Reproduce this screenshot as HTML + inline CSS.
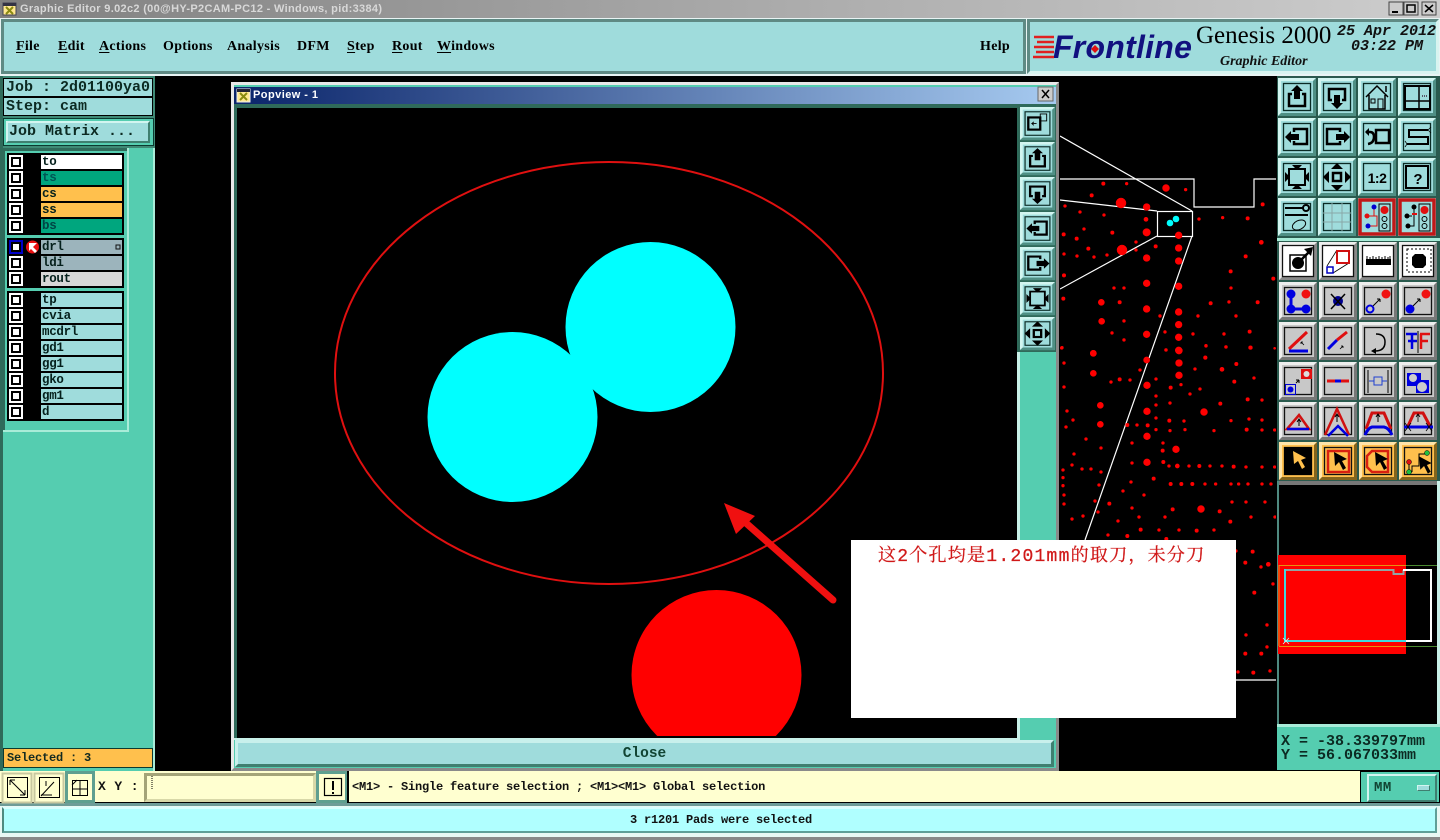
<!DOCTYPE html>
<html><head><meta charset="utf-8"><title>Graphic Editor</title>
<style>
html,body{margin:0;padding:0;width:1440px;height:840px;overflow:hidden;background:#000}
div{position:absolute;box-sizing:border-box;white-space:pre}
.m{font:bold 12px/14px "Liberation Mono",monospace;color:#123;letter-spacing:-.2px}
.l{font:bold 15px/18px "Liberation Mono",monospace;color:#0c2a22}
.n{font:bold 14px/16px "Liberation Serif",serif;color:#000;top:39px;letter-spacing:.3px}
.n u{text-decoration-thickness:1px;text-underline-offset:2px}
.r{left:41px;width:81px;height:14px;padding-left:1px;font:bold 12.5px/14px "Liberation Mono",monospace;color:#05201c;background:#9fdcdc;letter-spacing:-.3px}
.bev{border:2px solid;border-color:#d2f5f0 #3f7f70 #3f7f70 #d2f5f0}
</style></head><body>
<!-- title bar -->
<div style="left:0;top:0;width:1440px;height:18px;background:linear-gradient(90deg,#808080,#a8a8a8 50%,#cdcdcd)"></div>
<div style="left:20px;top:2px;font:bold 11px/14px 'Liberation Sans',sans-serif;color:#d8d8d8;letter-spacing:.32px">Graphic Editor 9.02c2 (00@HY-P2CAM-PC12 - Windows, pid:3384)</div>
<div style="left:0;top:18px;width:1440px;height:58px;background:#e8f4f4"></div>
<!-- menu -->
<div style="left:1px;top:19px;width:1025px;height:55px;background:#9fdcdc;border:3px solid #5f8a84"></div>
<div class="n" style="left:16px"><u>F</u>ile</div><div class="n" style="left:58px"><u>E</u>dit</div><div class="n" style="left:99px"><u>A</u>ctions</div><div class="n" style="left:163px">Options</div><div class="n" style="left:227px">Analysis</div><div class="n" style="left:297px">DFM</div><div class="n" style="left:347px"><u>S</u>tep</div><div class="n" style="left:392px"><u>R</u>out</div><div class="n" style="left:437px"><u>W</u>indows</div><div class="n" style="left:980px">Help</div>
<!-- logo -->
<div style="left:1027px;top:19px;width:412px;height:55px;background:#9fdcdc;border:3px solid;border-color:#5f8a84 #d8f4f0 #d8f4f0 #5f8a84"></div>
<div style="left:1053px;top:29px;font:italic bold 32px/36px 'Liberation Sans',sans-serif;color:#11117f;letter-spacing:.25px">Frontline</div>
<div style="left:1196px;top:21px;font:25px/29px 'Liberation Serif',serif;color:#000">Genesis 2000</div>
<div style="left:1337px;top:23px;font:italic bold 15px/17px 'Liberation Mono',monospace;color:#111">25 Apr 2012</div>
<div style="left:1351px;top:38px;font:italic bold 15px/17px 'Liberation Mono',monospace;color:#111">03:22 PM</div>
<div style="left:1220px;top:54px;font:italic bold 14px/16px 'Liberation Serif',serif;color:#111">Graphic Editor</div>
<!-- left panel -->
<div style="left:0;top:76px;width:155px;height:695px;background:#55cdb0;border-left:3px solid #2f6a5a;border-right:2px solid #a8ecd8"></div>
<div style="left:3px;top:76px;width:152px;height:72px;background:#3f8a76"></div>
<div class="l" style="left:3px;top:78px;width:150px;height:19px;background:#9fdcdc;border:1px solid #000;padding-left:2px;line-height:17px">Job : 2d01100ya0</div>
<div class="l" style="left:3px;top:97px;width:150px;height:19px;background:#9fdcdc;border:1px solid #000;padding-left:2px;line-height:18px">Step: cam</div>
<div style="left:3px;top:118px;width:151px;height:28px;background:#55cdb0;border:1px solid #0c3a30"></div>
<div class="l bev" style="left:6px;top:121px;width:144px;height:22px;background:#9fdcdc;padding-left:1px;line-height:18px">Job Matrix ...</div>
<div style="left:3px;top:148px;width:126px;height:284px;background:#2f6a5a;border-right:2px solid #a8ecd8;border-bottom:2px solid #a8ecd8"></div>
<div style="left:5px;top:151px;width:122px;height:279px;background:#55cdb0"></div>
<div style="left:7px;top:153px;width:117px;height:82px;background:#000"></div>
<div style="left:7px;top:238px;width:117px;height:50px;background:#000"></div>
<div style="left:7px;top:291px;width:117px;height:130px;background:#000"></div>
<div class="r" style="top:155px;background:#fff">to</div>
<div class="r" style="top:171px;background:#00a67e;color:#055">ts</div>
<div class="r" style="top:187px;background:#ffc04d">cs</div>
<div class="r" style="top:203px;background:#ffc04d">ss</div>
<div class="r" style="top:219px;background:#00a67e;color:#044">bs</div>
<div class="r" style="top:240px;background:#9cb4bc">drl</div>
<div class="r" style="top:256px;background:#9cb4bc">ldi</div>
<div class="r" style="top:272px;background:#d8d8d8">rout</div>
<div class="r" style="top:293px">tp</div>
<div class="r" style="top:309px">cvia</div>
<div class="r" style="top:325px">mcdrl</div>
<div class="r" style="top:341px">gd1</div>
<div class="r" style="top:357px">gg1</div>
<div class="r" style="top:373px">gko</div>
<div class="r" style="top:389px">gm1</div>
<div class="r" style="top:405px">d</div>
<div class="m" style="left:3px;top:748px;width:150px;height:20px;background:#ffc04d;border:1px solid #0c3a30;padding:2px 0 0 3px;color:#132a20;letter-spacing:-.2px">Selected : 3</div>
<!-- popview frame -->
<div style="left:231px;top:82px;width:828px;height:689px;background:#55cdb0;border:3px solid;border-color:#e8e8e8 #8a8a8a #8a8a8a #e8e8e8"></div>
<div style="left:234px;top:87px;width:822px;height:17px;background:linear-gradient(90deg,#0a246a,#a6caf0)"></div>
<div style="left:253px;top:88px;font:bold 11px/14px 'Liberation Sans',sans-serif;color:#fff;letter-spacing:.45px">Popview - 1</div>
<div style="left:234px;top:104px;width:822px;height:4px;background:#2f6a5a"></div>
<div style="left:234px;top:104px;width:4px;height:636px;background:#2f6a5a"></div>
<div style="left:1017px;top:104px;width:3px;height:636px;background:#c8f0e8"></div>
<div style="left:234px;top:738px;width:786px;height:2px;background:#c8f0e8"></div>
<div style="left:1017px;top:104px;width:39px;height:248px;background:#2f6a5a"></div>
<div style="left:235px;top:740px;width:819px;height:27px;background:#9fdcdc;border:3px solid;border-color:#c8f0ec #3f7f70 #3f7f70 #c8f0ec;text-align:center;font:bold 14.5px/23px 'Liberation Mono',monospace;color:#143">Close</div>
<!-- right column panels -->
<div style="left:1277px;top:76px;width:163px;height:405px;background:#2a5a4e"></div>
<div style="left:1277px;top:238px;width:163px;height:3px;background:#a8ecd8"></div>
<div style="left:1277px;top:481px;width:163px;height:4px;background:#777"></div>
<div style="left:1277px;top:481px;width:2px;height:246px;background:#4f8a80"></div>
<div style="left:1437px;top:481px;width:3px;height:246px;background:#c8f0e8"></div>
<div style="left:1277px;top:724px;width:163px;height:46px;background:#55cdb0;border-top:3px solid #a8ecd8"></div>
<div class="l" style="left:1281px;top:733px;color:#0c2a22">X = -38.339797mm</div>
<div class="l" style="left:1281px;top:747px;color:#0c2a22">Y = 56.067033mm</div>
<!-- bottom row -->
<div style="left:0;top:771px;width:1440px;height:33px;background:#ffffd0;border-bottom:2px solid #000"></div>
<div style="left:65px;top:771px;width:30px;height:32px;background:#ffffd0;border:3px solid #5f9f90"></div>
<div class="m" style="left:98px;top:780px;font-size:13px;letter-spacing:.4px;color:#111">X Y :</div>
<div style="left:144px;top:773px;width:172px;height:29px;background:#ffffd0;border:3px solid;border-color:#a4a478 #d8d8a8 #d8d8a8 #a4a478"></div>
<div style="left:316px;top:771px;width:32px;height:32px;background:#ffffd0;border:3px solid #5f9f90"></div>
<div style="left:347px;top:771px;width:2px;height:32px;background:#000"></div>
<div class="m" style="left:352px;top:780px;color:#111">&lt;M1&gt; - Single feature selection ; &lt;M1&gt;&lt;M1&gt; Global selection</div>
<div style="left:1360px;top:771px;width:80px;height:32px;background:#55cdb0;border:1px solid #000"></div>
<div class="m bev" style="left:1367px;top:774px;width:70px;height:28px;background:#55cdb0;padding:5px 0 0 5px;color:#143;font-size:14px;letter-spacing:.5px">MM</div>
<div style="left:1417px;top:785px;width:13px;height:6px;background:#9fdcdc;border:1px solid;border-color:#d2f5f0 #3f7f70 #3f7f70 #d2f5f0"></div>
<div style="left:0;top:803px;width:1440px;height:37px;background:#6e9c98"></div>
<div style="left:0;top:806px;width:1440px;height:31px;background:#e8f8f4"></div>
<div style="left:2px;top:807px;width:1435px;height:26px;background:#b0ffff;border-left:2px solid #4f8a80;border-bottom:2px solid #5f9f98;border-right:2px solid #5f9f98;border-top:2px solid #d8ffff"></div>
<div style="left:0;top:837px;width:1440px;height:3px;background:#888"></div>
<div class="m" style="left:630px;top:813px;color:#111">3 r1201 Pads were selected</div>

<svg width="1440" height="840" viewBox="0 0 1440 840" style="position:absolute;left:0;top:0" xmlns="http://www.w3.org/2000/svg">
<defs>
<clipPath id="cv"><rect x="237" y="108" width="780" height="628"/></clipPath>
<clipPath id="bd"><rect x="1060" y="80" width="216" height="640"/></clipPath>
<g id="bt"><rect width="38" height="38" fill="#9fdcdc"/><path d="M0 0H38L35 3H3V35L0 38z" fill="#d2f5f0"/><path d="M38 38H0L3 35H35V3L38 0z" fill="#4f8f84"/><rect x="5.5" y="5.5" width="27" height="27" fill="none" stroke="#0a2a24" stroke-width="1.3"/></g>
<g id="bg"><rect width="38" height="38" fill="#c8c8c8"/><path d="M0 0H38L35 3H3V35L0 38z" fill="#eee"/><path d="M38 38H0L3 35H35V3L38 0z" fill="#777"/><rect x="5.5" y="5.5" width="27" height="27" fill="none" stroke="#111" stroke-width="1.3"/></g>
<g id="bw"><rect width="38" height="38" fill="#fff"/><path d="M0 0H38L35 3H3V35L0 38z" fill="#eee"/><path d="M38 38H0L3 35H35V3L38 0z" fill="#888"/><rect x="3.5" y="3.5" width="31" height="31" fill="none" stroke="#111" stroke-width="1.3"/></g>
<g id="bo"><rect width="38" height="38" fill="#ffc04d"/><path d="M0 0H38L35 3H3V35L0 38z" fill="#ffe4a8"/><path d="M38 38H0L3 35H35V3L38 0z" fill="#84641c"/><rect x="5.5" y="5.5" width="27" height="27" fill="none" stroke="#111" stroke-width="1.3"/></g>
<g id="up"><path d="M14 16H11V28H27V16H24" fill="none" stroke="#000" stroke-width="2.5"/><path d="M19 7l6 6h-3v8h-6v-8h-3z"/></g>
<g id="dn"><path d="M14 22H11V11H27V22H24" fill="none" stroke="#000" stroke-width="2.5"/><path d="M19 31l6-6h-3v-8h-6v8h-3z"/></g>
<g id="lf"><path d="M16 14V11H29V26H16V23" fill="none" stroke="#000" stroke-width="2.5"/><path d="M7 19l6-6v3h8v6h-8v3z"/></g>
<g id="rt"><path d="M22 14V11H9V26H22V23" fill="none" stroke="#000" stroke-width="2.5"/><path d="M32 19l-6-6v3h-8v6h8v3z"/></g>
<g id="ot"><path d="M19 5l6 6H13zM19 33l6-6H13zM5 19l6-6v12zM33 19l-6-6v12z"/><rect x="15" y="15" width="8" height="8" fill="none" stroke="#000" stroke-width="2.5"/></g>
<g id="in"><path d="M19 12l5-5H14zM19 26l5 5H14zM12 19l-5-5v10zM26 19l5-5v10z"/><rect x="11" y="11" width="16" height="16" fill="none" stroke="#000" stroke-width="2"/></g>
<path id="cu" d="M14 10L15 24L19 20L23 28L26 26L22 19L27 17z"/>
</defs>

<!-- title bar icons -->
<g><rect x="3" y="3" width="13" height="12" fill="#ffe890" stroke="#445"/><rect x="3" y="3" width="13" height="3" fill="#334"/><path d="M6 7l7 7M13 7l-7 7" stroke="#8a8a10" stroke-width="2"/></g>
<g transform="translate(1389 2)"><rect width="14" height="13" fill="#ccc" stroke="#444"/><rect x="3" y="9" width="6" height="2" fill="#000"/></g>
<g transform="translate(1404 2)"><rect width="14" height="13" fill="#ccc" stroke="#444"/><rect x="3" y="3" width="8" height="7" fill="none" stroke="#000" stroke-width="1.5"/></g>
<g transform="translate(1422 2)"><rect width="14" height="13" fill="#ccc" stroke="#444"/><path d="M3 3l8 7M11 3l-8 7" stroke="#000" stroke-width="1.5"/></g>
<!-- Frontline logo -->
<path d="M1034 37h20M1037 42h17M1034 47h20M1036 52h18M1033 57h21" stroke="#e02020" stroke-width="2.5"/>
<path d="M1095 45l4 4-4 4-4-4z" fill="#e01010"/>
<!-- layer checkboxes -->
<g fill="#fff"><rect x="9" y="155" width="14" height="14"/><rect x="9" y="171" width="14" height="14"/><rect x="9" y="187" width="14" height="14"/><rect x="9" y="203" width="14" height="14"/><rect x="9" y="219" width="14" height="14"/><rect x="9" y="256" width="14" height="14"/><rect x="9" y="272" width="14" height="14"/><rect x="9" y="293" width="14" height="14"/><rect x="9" y="309" width="14" height="14"/><rect x="9" y="325" width="14" height="14"/><rect x="9" y="341" width="14" height="14"/><rect x="9" y="357" width="14" height="14"/><rect x="9" y="373" width="14" height="14"/><rect x="9" y="389" width="14" height="14"/><rect x="9" y="405" width="14" height="14"/></g>
<rect x="9" y="240" width="14" height="14" fill="#0000c8"/>
<g fill="#fff" stroke="#000" stroke-width="2"><rect x="12" y="158" width="8" height="8"/><rect x="12" y="174" width="8" height="8"/><rect x="12" y="190" width="8" height="8"/><rect x="12" y="206" width="8" height="8"/><rect x="12" y="222" width="8" height="8"/><rect x="12" y="243" width="8" height="8"/><rect x="12" y="259" width="8" height="8"/><rect x="12" y="275" width="8" height="8"/><rect x="12" y="296" width="8" height="8"/><rect x="12" y="312" width="8" height="8"/><rect x="12" y="328" width="8" height="8"/><rect x="12" y="344" width="8" height="8"/><rect x="12" y="360" width="8" height="8"/><rect x="12" y="376" width="8" height="8"/><rect x="12" y="392" width="8" height="8"/><rect x="12" y="408" width="8" height="8"/></g>
<circle cx="32.500" cy="247" r="6.500" fill="#e81010"/><path d="M37 243H29V251L31 249L35 253L37 251L33 247z" fill="#fff"/>
<rect x="116" y="245" width="4" height="4" fill="none" stroke="#111"/>

<!-- popview title icons -->
<g><rect x="237" y="89" width="13" height="13" fill="#ffe890" stroke="#eee"/><rect x="237" y="89" width="13" height="3" fill="#223"/><path d="M240 93l7 7M247 93l-7 7" stroke="#8a8a10" stroke-width="2"/></g>
<g transform="translate(1038 87)"><rect width="15" height="14" fill="#ccc" stroke="#666"/><path d="M4 3l7 8M11 3l-7 8" stroke="#000" stroke-width="1.5"/></g>

<!-- popview canvas -->
<rect x="237" y="108" width="780" height="630" fill="#000"/>
<g clip-path="url(#cv)">
<ellipse cx="609" cy="373" rx="274" ry="211" fill="none" stroke="#e01010" stroke-width="2"/>
<circle cx="512.500" cy="417" r="85" fill="#0ff"/><circle cx="650.500" cy="327" r="85" fill="#0ff"/>
<circle cx="716.500" cy="675" r="85" fill="#f00"/>
</g>
<path d="M833 600L738 516" stroke="#f01010" stroke-width="7" stroke-linecap="round"/><path d="M724 503L755 516L736 534z" fill="#f01010"/>

<!-- popview toolbar -->
<g transform="translate(1020 107) scale(.92 .87)"><use href="#bt"/><rect x="9" y="12" width="13" height="14" fill="none" stroke="#000" stroke-width="2.5"/><rect x="22" y="8" width="7" height="8" fill="none" stroke="#000"/><path d="M18 19h-5l2-2m-2 2l2 2" stroke="#000" fill="none"/></g>
<g transform="translate(1020 142) scale(.92 .87)"><use href="#bt"/><use href="#up"/></g>
<g transform="translate(1020 177) scale(.92 .87)"><use href="#bt"/><use href="#dn"/></g>
<g transform="translate(1020 212) scale(.92 .87)"><use href="#bt"/><use href="#lf"/></g>
<g transform="translate(1020 247) scale(.92 .87)"><use href="#bt"/><use href="#rt"/></g>
<g transform="translate(1020 282) scale(.92 .87)"><use href="#bt"/><use href="#in"/></g>
<g transform="translate(1020 317) scale(.92 .87)"><use href="#bt"/><use href="#ot"/></g>

<!-- board view -->
<g clip-path="url(#bd)">
<g fill="none" stroke="#fff" stroke-width="1.200">
<path d="M1060 136L1192 211"/><path d="M1060 179H1194V207H1254V179H1276"/><path d="M1060 200L1157 211"/><rect x="1157.500" y="211.500" width="35" height="25"/><path d="M1157 236L1060 289"/><path d="M1192 236L1085 540"/><path d="M1236 680H1276"/>
</g>
<g fill="#f00" stroke="#f00" stroke-width="2">
<circle cx="1121" cy="203" r="5" stroke-width=".5"/><circle cx="1122" cy="250" r="5" stroke-width=".5"/><circle cx="1166" cy="188" r="3.500" stroke-width=".5"/><circle cx="1204" cy="412" r="3.500" stroke-width=".5"/><circle cx="1201" cy="509" r="3.500" stroke-width=".5"/>
<g transform="translate(1055 340) scale(.3333)">
<g><circle cx="115" cy="40" r="9"/><circle cx="115" cy="100" r="9"/><circle cx="275" cy="60" r="9"/><circle cx="372" cy="32" r="10"/><circle cx="372" cy="69" r="10"/><circle cx="372" cy="106" r="10"/><circle cx="276" cy="136" r="10"/><circle cx="136" cy="196" r="9"/><circle cx="276" cy="214" r="10"/><circle cx="136" cy="253" r="9"/><circle cx="276" cy="289" r="10"/><circle cx="276" cy="367" r="10"/><circle cx="363" cy="328" r="10"/></g>
<g><circle cx="20" cy="24" r="4"/><circle cx="27" cy="69" r="4"/><circle cx="333" cy="30" r="4"/><circle cx="453" cy="17" r="4"/><circle cx="513" cy="21" r="4"/><circle cx="587" cy="23" r="5"/><circle cx="451" cy="53" r="5"/><circle cx="544" cy="72" r="5"/><circle cx="501" cy="88" r="6"/><circle cx="420" cy="87" r="4"/><circle cx="255" cy="90" r="4"/><circle cx="168" cy="126" r="4"/><circle cx="194" cy="118" r="5"/><circle cx="225" cy="120" r="4"/><circle cx="303" cy="117" r="4"/><circle cx="27" cy="141" r="4"/><circle cx="347" cy="143" r="5"/><circle cx="378" cy="134" r="4"/><circle cx="435" cy="147" r="4"/><circle cx="538" cy="125" r="5"/><circle cx="597" cy="114" r="4"/><circle cx="303" cy="168" r="4"/><circle cx="405" cy="162" r="4"/><circle cx="578" cy="178" r="5"/><circle cx="621" cy="180" r="4"/><circle cx="345" cy="189" r="4"/><circle cx="496" cy="191" r="5"/><circle cx="303" cy="195" r="4"/><circle cx="36" cy="213" r="4"/><circle cx="54" cy="240" r="4"/><circle cx="33" cy="261" r="4"/><circle cx="217" cy="255" r="5"/><circle cx="246" cy="255" r="4"/><circle cx="278" cy="256" r="5"/><circle cx="303" cy="234" r="4"/><circle cx="343" cy="242" r="5"/><circle cx="387" cy="243" r="4"/><circle cx="528" cy="242" r="4"/><circle cx="582" cy="237" r="4"/><circle cx="621" cy="240" r="4"/><circle cx="303" cy="269" r="4"/><circle cx="345" cy="272" r="4"/><circle cx="390" cy="269" r="4"/><circle cx="477" cy="272" r="4"/><circle cx="575" cy="269" r="5"/><circle cx="621" cy="270" r="4"/><circle cx="659" cy="270" r="4"/><circle cx="93" cy="297" r="4"/><circle cx="231" cy="309" r="4"/><circle cx="324" cy="309" r="4"/><circle cx="138" cy="324" r="4"/><circle cx="323" cy="332" r="5"/><circle cx="57" cy="342" r="4"/><circle cx="231" cy="369" r="4"/><circle cx="325" cy="366" r="5"/><circle cx="51" cy="375" r="4"/><circle cx="81" cy="387" r="4"/><circle cx="108" cy="387" r="4"/><circle cx="24" cy="390" r="4"/><circle cx="138" cy="396" r="4"/><circle cx="342" cy="378" r="4"/><circle cx="367" cy="378" r="6"/><circle cx="402" cy="378" r="4"/><circle cx="433" cy="378" r="5"/><circle cx="465" cy="378" r="4"/><circle cx="501" cy="378" r="4"/><circle cx="536" cy="380" r="5"/><circle cx="573" cy="381" r="4"/><circle cx="621" cy="381" r="4"/><circle cx="659" cy="381" r="4"/><circle cx="24" cy="413" r="4"/><circle cx="296" cy="416" r="5"/><circle cx="228" cy="426" r="4"/><circle cx="132" cy="435" r="4"/><circle cx="24" cy="437" r="4"/><circle cx="347" cy="432" r="5"/><circle cx="379" cy="432" r="5"/><circle cx="412" cy="432" r="5"/><circle cx="450" cy="432" r="4"/><circle cx="482" cy="432" r="4"/><circle cx="528" cy="432" r="4"/><circle cx="551" cy="432" r="4"/><circle cx="579" cy="432" r="4"/><circle cx="621" cy="432" r="4"/><circle cx="648" cy="432" r="4"/><circle cx="204" cy="453" r="4"/><circle cx="27" cy="465" r="4"/><circle cx="267" cy="465" r="4"/><circle cx="120" cy="483" r="4"/><circle cx="27" cy="492" r="4"/><circle cx="163" cy="491" r="5"/><circle cx="531" cy="486" r="4"/><circle cx="573" cy="486" r="4"/><circle cx="630" cy="486" r="4"/><circle cx="231" cy="504" r="4"/><circle cx="353" cy="508" r="5"/><circle cx="494" cy="514" r="5"/><circle cx="129" cy="516" r="4"/><circle cx="252" cy="531" r="4"/><circle cx="330" cy="531" r="4"/><circle cx="588" cy="531" r="4"/><circle cx="660" cy="531" r="4"/><circle cx="84" cy="528" r="4"/><circle cx="51" cy="537" r="4"/><circle cx="189" cy="543" r="4"/><circle cx="526" cy="545" r="5"/><circle cx="257" cy="569" r="5"/><circle cx="312" cy="570" r="4"/><circle cx="372" cy="570" r="4"/><circle cx="425" cy="572" r="5"/><circle cx="477" cy="570" r="4"/><circle cx="159" cy="585" r="4"/><circle cx="217" cy="588" r="5"/><circle cx="334" cy="597" r="5"/><circle cx="543" cy="633" r="4"/><circle cx="593" cy="635" r="5"/><circle cx="571" cy="668" r="5"/><circle cx="618" cy="681" r="4"/><circle cx="640" cy="673" r="6"/><circle cx="654" cy="732" r="4"/><circle cx="598" cy="758" r="5"/><circle cx="636" cy="855" r="4"/><circle cx="573" cy="885" r="4"/><circle cx="636" cy="921" r="4"/><circle cx="571" cy="941" r="5"/><circle cx="619" cy="941" r="5"/><circle cx="549" cy="996" r="4"/><circle cx="595" cy="998" r="5"/><circle cx="645" cy="993" r="4"/></g>
</g>
<g transform="translate(1010 80) scale(.3333)">
<g><circle cx="410" cy="381" r="10"/><circle cx="410" cy="457" r="11"/><circle cx="410" cy="534" r="10"/><circle cx="410" cy="610" r="10"/><circle cx="410" cy="687" r="10"/><circle cx="410" cy="763" r="10"/><circle cx="506" cy="466" r="10"/><circle cx="506" cy="504" r="10"/><circle cx="506" cy="543" r="10"/><circle cx="506" cy="619" r="10"/><circle cx="506" cy="696" r="10"/><circle cx="506" cy="734" r="10"/><circle cx="506" cy="772" r="10"/><circle cx="506" cy="811" r="10"/><circle cx="274" cy="667" r="9"/><circle cx="275" cy="724" r="9"/><circle cx="250" cy="820" r="9"/></g>
<g><circle cx="280" cy="311" r="5"/><circle cx="350" cy="311" r="4"/><circle cx="527" cy="329" r="4"/><circle cx="245" cy="346" r="5"/><circle cx="165" cy="378" r="4"/><circle cx="210" cy="396" r="4"/><circle cx="282" cy="405" r="4"/><circle cx="408" cy="418" r="6"/><circle cx="567" cy="417" r="4"/><circle cx="638" cy="413" r="4"/><circle cx="713" cy="415" r="5"/><circle cx="758" cy="373" r="5"/><circle cx="790" cy="596" r="5"/><circle cx="222" cy="447" r="4"/><circle cx="161" cy="463" r="5"/><circle cx="307" cy="458" r="5"/><circle cx="200" cy="476" r="5"/><circle cx="378" cy="486" r="4"/><circle cx="437" cy="499" r="5"/><circle cx="235" cy="506" r="5"/><circle cx="378" cy="510" r="4"/><circle cx="162" cy="522" r="4"/><circle cx="201" cy="528" r="4"/><circle cx="252" cy="531" r="4"/><circle cx="291" cy="525" r="4"/><circle cx="754" cy="487" r="6"/><circle cx="707" cy="529" r="5"/><circle cx="662" cy="574" r="5"/><circle cx="162" cy="586" r="5"/><circle cx="312" cy="624" r="4"/><circle cx="342" cy="624" r="4"/><circle cx="663" cy="624" r="4"/><circle cx="160" cy="656" r="5"/><circle cx="329" cy="667" r="5"/><circle cx="602" cy="670" r="5"/><circle cx="657" cy="666" r="4"/><circle cx="743" cy="667" r="5"/><circle cx="342" cy="723" r="4"/><circle cx="450" cy="708" r="4"/><circle cx="564" cy="708" r="4"/><circle cx="678" cy="708" r="4"/><circle cx="306" cy="759" r="4"/><circle cx="465" cy="756" r="4"/><circle cx="549" cy="762" r="4"/><circle cx="642" cy="762" r="4"/><circle cx="719" cy="755" r="5"/><circle cx="342" cy="780" r="4"/><circle cx="156" cy="803" r="4"/><circle cx="468" cy="810" r="4"/><circle cx="588" cy="798" r="4"/><circle cx="648" cy="801" r="4"/><circle cx="721" cy="803" r="5"/><circle cx="794" cy="805" r="3"/><circle cx="586" cy="833" r="5"/></g>
</g>
</g>
<circle cx="1170" cy="223" r="3.300" fill="#0ff"/><circle cx="1176" cy="219" r="3.300" fill="#0ff"/>
</g>

<!-- right toolbar: top rows -->
<g transform="translate(1278 78)"><use href="#bt"/><use href="#up"/></g>
<g transform="translate(1318 78)"><use href="#bt"/><use href="#dn"/></g>
<g transform="translate(1358 78)"><use href="#bt"/><path d="M8 19L19 8L30 19M11 17V31H27V17M28 14V8" fill="none" stroke="#000" stroke-width="1.500"/><rect x="13" y="21" width="4" height="4" fill="none" stroke="#000"/><path d="M20 31V21H25V31" fill="none" stroke="#000"/></g>
<g transform="translate(1398 78)"><use href="#bt"/><rect x="7" y="8" width="25" height="23" fill="none" stroke="#000" stroke-width="2"/><path d="M7 23H32M21 8V31" stroke="#000" stroke-width="1.500"/><path d="M24 18h6" stroke="#556" stroke-width="2" stroke-dasharray="1 1"/></g>
<g transform="translate(1278 118)"><use href="#bt"/><use href="#lf"/></g>
<g transform="translate(1318 118)"><use href="#bt"/><use href="#rt"/></g>
<g transform="translate(1358 118)"><use href="#bt"/><rect x="18" y="12" width="13" height="13" fill="none" stroke="#000" stroke-width="2.500"/><path d="M8 14H12Q16 14 16 19Q16 25 10 26" fill="none" stroke="#000" stroke-width="2.500"/><path d="M7 14l4-4v8z"/></g>
<g transform="translate(1398 118)"><use href="#bt"/><path d="M30 12H11V19H30V26H9" fill="none" stroke="#000" stroke-width="2"/><path d="M30 12l3-3M30 12l3 3M9 26l-2-3M9 26l-2 3" stroke="#000" stroke-width=".7"/></g>
<g transform="translate(1278 158)"><use href="#bt"/><use href="#in"/></g>
<g transform="translate(1318 158)"><use href="#bt"/><use href="#ot"/></g>
<g transform="translate(1358 158)"><use href="#bt"/><text x="19" y="25" text-anchor="middle" font-family="Liberation Sans,sans-serif" font-weight="bold" font-size="14" letter-spacing="-.5" fill="#000">1:2</text></g>
<g transform="translate(1398 158)"><use href="#bt"/><rect x="8" y="8" width="22" height="22" fill="none" stroke="#000" stroke-width="2"/><text x="20" y="26" text-anchor="middle" font-family="Liberation Sans,sans-serif" font-weight="bold" font-size="15" fill="#000">?</text></g>
<g transform="translate(1278 198)"><use href="#bt"/><path d="M7 10H26M7 17H30" stroke="#000" stroke-width="2"/><circle cx="28" cy="10" r="3" fill="none" stroke="#000" stroke-width="2"/><ellipse cx="21" cy="27" rx="7" ry="4.500" fill="none" stroke="#000" transform="rotate(-25 21 27)"/></g>
<g transform="translate(1318 198)"><use href="#bt"/><path d="M5 15H33M5 24H33M14 5V33M24 5V33" stroke="#88a8a8"/></g>
<g transform="translate(1358 198)"><rect width="38" height="38" fill="#9fdcdc"/><rect x="2" y="2" width="34" height="34" fill="none" stroke="#c01818" stroke-width="3.500"/><rect x="21" y="6" width="11" height="27" fill="none" stroke="#000"/><circle cx="26.500" cy="12" r="4" fill="#e01010"/><circle cx="26.500" cy="21" r="2.500" fill="none" stroke="#000"/><circle cx="26.500" cy="28" r="2.500" fill="none" stroke="#000"/><path d="M16 9V18H9M16 18H19V28H10" fill="none" stroke="#e01010"/><circle cx="16" cy="9" r="2.500" fill="#0000d0"/><circle cx="9" cy="18" r="2.500" fill="#e01010"/><circle cx="10" cy="28" r="2.500" fill="#0000d0"/></g>
<g transform="translate(1398 198)"><rect width="38" height="38" fill="#9fdcdc"/><rect x="2" y="2" width="34" height="34" fill="none" stroke="#c01818" stroke-width="3.500"/><rect x="21" y="6" width="11" height="27" fill="none" stroke="#000"/><circle cx="26.500" cy="12" r="4" fill="#e01010"/><circle cx="26.500" cy="21" r="2.500" fill="none" stroke="#000"/><circle cx="26.500" cy="28" r="2.500" fill="none" stroke="#000"/><path d="M16 9V28H10M9 18H14" fill="none" stroke="#000"/><path d="M14 16h5" stroke="#e01010" stroke-width="2"/><circle cx="16" cy="9" r="2.500"/><circle cx="9" cy="18" r="2.500"/><circle cx="10" cy="28" r="2.500"/></g>
<!-- white row -->
<g transform="translate(1279 242)"><use href="#bw"/><rect x="11" y="13" width="16" height="16" fill="none" stroke="#000" stroke-width="1.500"/><circle cx="19" cy="21" r="6"/><path d="M19 21L31 9" stroke="#000" stroke-width="2.500"/><path d="M34 5L32 14L25 7z"/></g>
<g transform="translate(1319 242)"><use href="#bw"/><path d="M8 24L18 8M14 31L30 21" stroke="#000" stroke-width=".8"/><rect x="18" y="9" width="12" height="12" fill="#fff" stroke="#d01010" stroke-width="2"/><rect x="8" y="25" width="6" height="6" fill="#fff" stroke="#0000c0" stroke-width="1.500"/></g>
<g transform="translate(1359 242)"><use href="#bw"/><rect x="7" y="17" width="25" height="6"/><path d="M8 14V18M11 15V18M14 14V18M17 15V18M20 14V18M23 15V18M26 14V18M29 15V18M31 14V18" stroke="#000"/></g>
<g transform="translate(1399 242)"><use href="#bw"/><rect x="8" y="7" width="24" height="23" fill="none" stroke="#000" stroke-dasharray="2 2"/><path d="M16 12H24L27 15V23L24 26H16L13 23V15z"/></g>
<!-- gray rows -->
<g transform="translate(1279 282)"><use href="#bg"/><path d="M12 12V27H27" fill="none" stroke="#0000e0" stroke-width="3"/><circle cx="12" cy="12" r="4.500" fill="#0000e0"/><circle cx="12" cy="27" r="4.500" fill="#0000e0"/><circle cx="27" cy="27" r="4.500" fill="#0000e0"/><circle cx="27" cy="12" r="4.500" fill="#f01010"/></g>
<g transform="translate(1319 282)"><use href="#bg"/><circle cx="19" cy="19" r="5" fill="#000090"/><path d="M12 12L26 27M26 12L12 27" stroke="#000" stroke-width="1.500"/></g>
<g transform="translate(1359 282)"><use href="#bg"/><circle cx="11" cy="27" r="3.500" fill="none" stroke="#0000e0" stroke-width="2"/><circle cx="27" cy="12" r="4.500" fill="#f01010"/><path d="M14 24L21 17M21 17h-3M21 17v3" fill="none" stroke="#000"/></g>
<g transform="translate(1399 282)"><use href="#bg"/><circle cx="11" cy="27" r="4.500" fill="#0000e0"/><circle cx="27" cy="12" r="4.500" fill="#f01010"/><path d="M14 24L21 17M21 17h-3M21 17v3" fill="none" stroke="#000"/></g>
<g transform="translate(1279 322)"><use href="#bg"/><path d="M10 27L28 10" stroke="#e01010" stroke-width="3"/><path d="M10 29H29" stroke="#0000e0" stroke-width="3"/><path d="M25 23l-3-3m0 0v2m0-2h2" fill="none" stroke="#000" stroke-width=".8"/></g>
<g transform="translate(1319 322)"><use href="#bg"/><path d="M9 27L18 18" stroke="#0000e0" stroke-width="3"/><path d="M18 18L28 10" stroke="#e01010" stroke-width="3"/><path d="M21 27l3-3m0 0v2m0-2h-2" fill="none" stroke="#000" stroke-width=".8"/></g>
<g transform="translate(1359 322)"><use href="#bg"/><path d="M17 12Q26 12 26 20Q26 29 16 29" fill="none" stroke="#000" stroke-width="1.500"/><path d="M12 29l5-3v6z"/></g>
<g transform="translate(1399 322)"><use href="#bg"/><path d="M18 12H7M18 19H9M13 12V27" fill="none" stroke="#0000e0" stroke-width="2.500"/><path d="M21 12H31M21 19H29M22 12V27" fill="none" stroke="#e01010" stroke-width="2.500"/><path d="M19 9V31" stroke="#000"/></g>
<g transform="translate(1279 362)"><use href="#bg"/><rect x="22" y="7" width="11" height="10" fill="#e01010"/><circle cx="27.500" cy="12" r="3" fill="#ddd"/><rect x="6.500" y="22.500" width="10" height="10" fill="none" stroke="#0000d0"/><circle cx="11.500" cy="27.500" r="3" fill="#0000e0"/><path d="M17 21l3-3m0 0h-3m3 0v3" stroke="#000" fill="none"/></g>
<g transform="translate(1319 362)"><use href="#bg"/><path d="M8 19H30" stroke="#e01010" stroke-width="3"/><path d="M16 19H22" stroke="#0000e0" stroke-width="3"/></g>
<g transform="translate(1359 362)"><use href="#bg"/><path d="M9 8V31M29 8V31" stroke="#000"/><rect x="15" y="15" width="8" height="8" fill="none" stroke="#2040d0"/><path d="M10 19H15M23 19H28" stroke="#2040d0"/></g>
<g transform="translate(1399 362)"><use href="#bg"/><path d="M8 11H22V18H30V31H17V24H8z" fill="#0000e0"/><circle cx="14" cy="16" r="4" fill="#ccc"/><circle cx="23" cy="25" r="5" fill="#ccc"/></g>
<g transform="translate(1279 402)"><use href="#bg"/><path d="M20 13L30 27H8z" fill="none" stroke="#d01010" stroke-width="2.500"/><path d="M8 27H30" stroke="#0000e0" stroke-width="2.500"/><path d="M20 24V18M18 20l2-3 2 3" stroke="#000" fill="none"/></g>
<g transform="translate(1319 402)"><use href="#bg"/><path d="M6 33L18 7L30 33" fill="none" stroke="#d01010" stroke-width="2.500"/><path d="M9 34L19 24L29 34" fill="none" stroke="#0000e0" stroke-width="2.500"/><path d="M18 20V13M16 15l2-3 2 3" stroke="#000" fill="none"/></g>
<g transform="translate(1359 402)"><use href="#bg"/><path d="M7 27L13 11H25L32 27" fill="none" stroke="#d01010" stroke-width="3"/><path d="M6 33Q9 26 13 25H25Q30 26 33 33" fill="none" stroke="#0000e0" stroke-width="3"/><path d="M19 20V13M17 15l2-3 2 3" stroke="#000" fill="none"/></g>
<g transform="translate(1399 402)"><use href="#bg"/><path d="M9 24L15 11H24L31 24" fill="none" stroke="#d01010" stroke-width="3"/><path d="M5 25H34" stroke="#0000e0" stroke-width="3"/><path d="M6 21l6 8M12 21l-6 8M27 21l6 8M33 21l-6 8M19 20V13M17 15l2-3 2 3" stroke="#000" stroke-width=".8" fill="none"/></g>
<!-- orange row -->
<g transform="translate(1279 442)"><use href="#bo"/><rect x="5" y="5" width="28" height="28"/><path d="M14 10L15 23L19 20L23 28L26 26L22 19L27 17z" transform="translate(0 -1)" fill="#ffc04d"/></g>
<g transform="translate(1319 442)"><use href="#bo"/><rect x="9" y="9" width="21" height="21" fill="none" stroke="#d82010" stroke-width="2.500"/><use href="#cu" fill="#000" transform="translate(1 0)"/></g>
<g transform="translate(1359 442)"><use href="#bo"/><path d="M13 9H29V30H13L8 25V14z" fill="none" stroke="#d82010" stroke-width="2.500"/><use href="#cu" fill="#000" transform="translate(2 0)"/></g>
<g transform="translate(1399 442)"><use href="#bo"/><path d="M10 20V30M10 30H13M13 30V24H20V12H27" fill="none" stroke="#000"/><circle cx="10" cy="20" r="2.500" fill="#e01010" stroke="#000" stroke-width=".5"/><circle cx="10" cy="30" r="2.500" fill="#20c040" stroke="#000" stroke-width=".5"/><circle cx="28" cy="11" r="2.500" fill="#20c040" stroke="#000" stroke-width=".5"/><use href="#cu" fill="#000" transform="translate(7 5) scale(.95)"/></g>

<!-- minimap -->
<rect x="1279" y="485" width="158" height="239" fill="#000"/>
<rect x="1278" y="555" width="128" height="99" fill="#f00"/>
<path d="M1279 565.500H1406M1279 646.500H1406" stroke="#e89010"/><path d="M1279 565V646" stroke="#e89010"/><path d="M1406 565.500H1437M1406 646.500H1437" stroke="#4a8a30"/>
<path d="M1286 570H1393.500V574H1403.500V570" fill="none" stroke="#90a4a4" stroke-width="2"/>
<path d="M1403 570H1431V641H1406" fill="none" stroke="#fff" stroke-width="2"/>
<path d="M1285 569V641H1406" fill="none" stroke="#40d8e0" stroke-width="2"/>
<path d="M1283 638l6 6M1289 638l-6 6" stroke="#d0f8f8" stroke-width=".8"/>

<!-- bottom buttons -->
<g fill="none" stroke="#000">
<rect x="2.500" y="773.500" width="29" height="29" stroke="#c8c8a0" stroke-width="2"/><rect x="7.500" y="777.500" width="20" height="20"/><path d="M10 780L25 795M10 780h5M10 780v5M25 795h-5M25 795v-5"/>
<rect x="34.500" y="773.500" width="29" height="29" stroke="#c8c8a0" stroke-width="2"/><rect x="39.500" y="777.500" width="20" height="20"/><path d="M41 796L54 782M41 795H52M46 781V786"/>
<rect x="72.500" y="780.500" width="15" height="15"/><path d="M73 789H88M80 781V795M72 785L77 780"/>
<rect x="324.500" y="778.500" width="17" height="17" stroke-width="1.200"/><path d="M333 781V790M333 792V794" stroke-width="2"/>
<path d="M152 776V790" stroke-dasharray="1 1"/>
</g>
</svg>

<!-- note box -->
<div style="left:851px;top:540px;width:385px;height:178px;background:#fff"></div>
<div style="left:878px;top:546px;font:18px/22px 'Liberation Mono','Noto Serif CJK SC',serif;color:#d01818;letter-spacing:1.25px;-webkit-text-stroke:.25px #d01818">这2个孔均是1.201mm的取刀，未分刀</div>
</body></html>
